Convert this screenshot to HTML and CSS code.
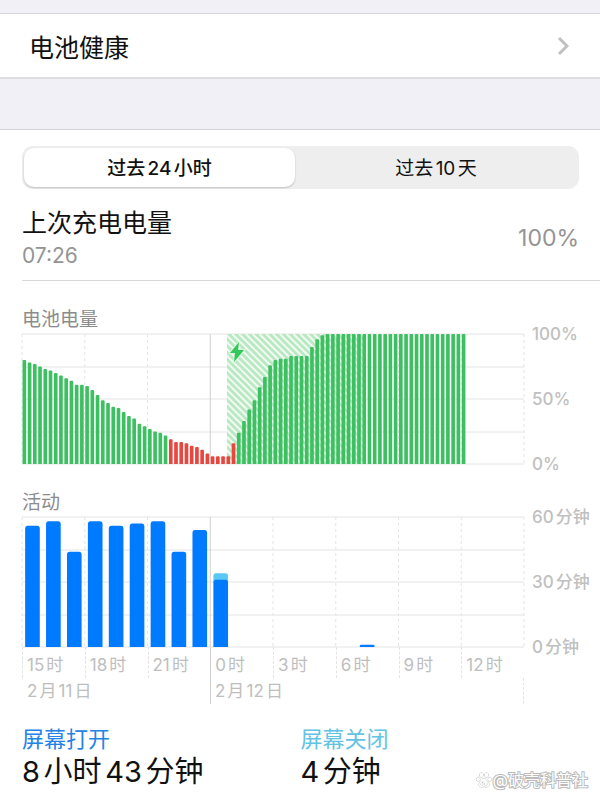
FILE: index.html
```html
<!DOCTYPE html>
<html lang="zh-CN">

<head>
    <meta charset="UTF-8">
    <meta name="viewport" content="width=device-width, initial-scale=1.0">
    <title>电池</title>
    <link rel="stylesheet" href="styles.css">
</head>

<body>
    <a class="row-link" href="#health">
        <span>电池健康</span>
        <svg class="chevron" viewBox="0 0 12 20" aria-hidden="true">
            <path d="M2 2l8 8-8 8" />
        </svg>
    </a>

    <main class="panel">
        <div class="segmented">
            <button type="button" class="segment active">过去24小时</button>
            <button type="button" class="segment">过去10天</button>
        </div>

        <div class="last-charge">
            <div>
                <h2>上次充电电量</h2>
                <p>07:26</p>
            </div>
            <span class="charge-value">100%</span>
        </div>

        <section class="chart">
            <h3>电池电量</h3>
            <div class="chart-body">
                <div class="plot">
                    <svg id="battery" class="plot-svg" viewBox="0 0 960 130" preserveAspectRatio="none"></svg>
                    <svg class="bolt" viewBox="0 0 16 22" aria-hidden="true">
                        <path d="M10 1L1 12h5L5 21 15 9H9z" />
                    </svg>
                </div>
                <div class="scale">
                    <span>100%</span>
                    <span>50%</span>
                    <span>0%</span>
                </div>
            </div>
        </section>

        <section class="chart activity">
            <h3>活动</h3>
            <div class="chart-body">
                <div class="plot">
                    <svg id="activity" class="plot-svg" viewBox="0 0 960 130" preserveAspectRatio="none"></svg>
                </div>
                <div class="scale">
                    <span>60分钟</span>
                    <span>30分钟</span>
                    <span>0分钟</span>
                </div>
                <div class="axis">
                    <div class="hours">
                        <span>15时</span>
                        <span>18时</span>
                        <span>21时</span>
                        <span class="midnight">0时</span>
                        <span>3时</span>
                        <span>6时</span>
                        <span>9时</span>
                        <span>12时</span>
                    </div>
                    <div class="dates">
                        <span>2月11日</span>
                        <span class="midnight">2月12日</span>
                    </div>
                </div>
            </div>
        </section>

        <div class="totals">
            <div>
                <h4 class="screen-on">屏幕打开</h4>
                <p>8小时43分钟</p>
            </div>
            <div>
                <h4 class="screen-off">屏幕关闭</h4>
                <p>4分钟</p>
            </div>
        </div>

        <div class="watermark">
            <svg viewBox="0 0 16 16" aria-hidden="true">
                <ellipse cx="5.5" cy="3" rx="1.7" ry="2.3" />
                <ellipse cx="10.5" cy="3" rx="1.7" ry="2.3" />
                <ellipse cx="2.3" cy="7.3" rx="1.6" ry="2.1" />
                <ellipse cx="13.7" cy="7.3" rx="1.6" ry="2.1" />
                <path d="M8 6.600c-2 0-2.400 2-4 3.400-1.600 1.500-1.400 5 1.400 5 1.200 0 1.600-.4 2.600-.4s1.400.4 2.600.4c2.800 0 3-3.500 1.400-5C10.400 8.600 10 6.600 8 6.600z" />
                <path d="M6.700 9.500v3.500H5.500q-1-.9 0-1.900h1.200M8.800 10.800v2.200h2.100v-2.200" />
            </svg>
            <span>@破壳科普社</span>
        </div>
    </main>
    <script src="main.js"></script>
</body>

</html>
```

FILE: styles.css
```css
/* 全局样式 */
body {
    font-family: Inter, "Noto Sans CJK SC", sans-serif;
    background-color: #f1f0f6;
    color: #111;
    margin: 0;
    padding-top: 13px;
    text-autospace: normal;
}

h2,
h3,
h4,
p {
    margin: 0;
    font-weight: 400;
}

/* 电池健康入口 */
.row-link {
    display: flex;
    align-items: center;
    justify-content: space-between;
    height: 63px;
    padding: 0 31px 0 29px;
    background-color: #fff;
    border-top: 1px solid #d8d8da;
    border-bottom: 2px solid #dededf;
    color: #111;
    font-size: 25px;
    text-decoration: none;
}

.chevron {
    width: 12px;
    height: 20px;
    fill: none;
    stroke: #c0c0c2;
    stroke-width: 3;
}

/* 主面板 */
.panel {
    position: relative;
    margin-top: 50px;
    padding: 16px 0 12px 22px;
    background-color: #fff;
    border-top: 1px solid #d4d4d6;
}

/* 时间段切换 */
.segmented {
    display: grid;
    grid-template-columns: 49fr 51fr;
    height: 39px;
    margin-right: 21px;
    padding: 2px;
    border-radius: 11px;
    background-color: #eee;
}

.segment {
    padding: 0 0 3px;
    border: none;
    border-radius: 10px;
    background: none;
    color: #111;
    font-family: inherit;
    font-size: 19px;
    cursor: pointer;
}

.segment.active {
    background-color: #fff;
    box-shadow: 0 1px 2px rgba(0, 0, 0, 0.2);
    font-weight: 500;
}

/* 上次充电 */
.last-charge {
    display: flex;
    align-items: center;
    justify-content: space-between;
    padding: 16px 21px 9px 0;
    border-bottom: 1px solid #d8d8d8;
}

.last-charge h2 {
    font-size: 25px;
    line-height: 36px;
}

.last-charge p {
    color: #949494;
    font-size: 21px;
    line-height: 30px;
}

.charge-value {
    color: #949494;
    font-size: 23px;
}

/* 图表 */
.chart {
    padding-top: 25px;
}

.chart h3 {
    color: #8c8c8c;
    font-size: 19px;
    line-height: 28px;
}

.chart-body {
    display: grid;
    grid-template-columns: 1fr 76px;
}

.plot {
    position: relative;
    height: 130px;
}

.plot-svg {
    display: block;
    width: 100%;
    height: 130px;
    overflow: visible;
}

.grid-line {
    stroke: #e4e4e4;
    stroke-width: 1;
    vector-effect: non-scaling-stroke;
}

.grid-line.dashed {
    stroke-dasharray: 3 3;
}

.grid-line.solid {
    stroke: #cfcfcf;
}

.hatch-back {
    fill: #b9e8c2;
}

.hatch-line {
    stroke: #f1fbf3;
    stroke-width: 2;
    vector-effect: non-scaling-stroke;
}

.level {
    fill: #3dc061;
}

.level.low {
    fill: #e8473f;
}

.bar-on {
    fill: #007aff;
}

.bar-off {
    fill: #5ac8f5;
}

.bolt {
    position: absolute;
    top: 7px;
    left: 41%;
    width: 18px;
    height: 22px;
    fill: #34c759;
    stroke: #d9f5de;
    stroke-width: 2;
    paint-order: stroke;
}

.scale {
    display: flex;
    flex-direction: column;
    justify-content: space-between;
    margin: -10px 0;
    padding-left: 8px;
    color: #c0c0c0;
    font-size: 17px;
    font-weight: 500;
    line-height: 20px;
    white-space: nowrap;
}

/* 时间轴 */
.axis {
    color: #bebebe;
    font-size: 17px;
    line-height: 26px;
}

.hours {
    display: grid;
    grid-template-columns: repeat(8, 1fr);
}

.hours span,
.dates span {
    padding: 5px 0 0 4px;
    border-left: 1px dashed #e4e4e4;
    white-space: nowrap;
}

.dates {
    display: grid;
    grid-template-columns: 3fr 5fr;
    border-right: 1px dashed #e4e4e4;
}

.dates span {
    padding-top: 0;
    border-left-color: transparent;
}

.hours .midnight,
.dates .midnight {
    border-left: 1px solid #cfcfcf;
}

/* 合计 */
.totals {
    display: grid;
    grid-template-columns: 1fr 1fr;
    padding-top: 19px;
    margin-right: 21px;
}

.totals h4 {
    font-size: 22px;
    line-height: 32px;
}

.totals p {
    font-size: 29px;
    line-height: 34px;
}

.screen-on {
    color: #2583e6;
}

.screen-off {
    color: #62c3e3;
}

/* 水印 */
.watermark {
    position: absolute;
    right: 12px;
    bottom: 10px;
    display: flex;
    align-items: center;
    gap: 1px;
    color: #fff;
    font-size: 16px;
    line-height: 22px;
    text-autospace: no-autospace;
    -webkit-text-stroke: 2px #bbb;
    paint-order: stroke fill;
}

.watermark svg {
    width: 16px;
    height: 16px;
    fill: #fff;
    stroke: #bbb;
    stroke-width: 1;
}
```

FILE: main.js
```javascript
// 每 15 分钟一个电量值
const levels = [
    80, 78, 77, 75, 73, 72, 70, 68, 66, 64, 61, 61,
    60, 57, 53, 49, 47, 44, 43, 40, 37, 35, 31, 29,
    27, 25, 24, 22, 19, 17, 17, 16, 14, 13, 11, 8,
    6, 6, 6, 6, 16, 24, 33, 42, 49, 59, 67, 76,
    80, 81, 81, 83, 83, 83, 83, 90, 96, 99
];
while (levels.length < 85) levels.push(100);

// 每小时使用分钟数：[小时序号, 屏幕打开, 屏幕关闭]
const usage = [
    [0, 56, 0], [1, 58, 0], [2, 44, 0], [3, 58, 0], [4, 56, 0], [5, 57, 0],
    [6, 58, 0], [7, 44, 0], [8, 54, 0], [9, 31, 3], [16, 1, 0]
];

const H = 130;

function grid() {
    let out = '';
    for (let i = 0; i <= 4; i++) {
        const y = Math.round(i * H / 4);
        out += `<line class="grid-line" x1="0" x2="960" y1="${y}" y2="${y}"/>`;
    }
    for (let i = 0; i <= 8; i++) {
        const type = i === 3 ? 'solid' : 'dashed';
        out += `<line class="grid-line ${type}" x1="${i * 120}" x2="${i * 120}" y1="0" y2="${H}"/>`;
    }
    return out;
}

// 充电时段的斜纹
function hatch(from, to) {
    let out = `<clipPath id="charging"><rect x="${from}" y="0" width="${to - from}" height="${H}"/></clipPath>`;
    out += `<g clip-path="url(#charging)"><rect class="hatch-back" x="${from}" y="0" width="${to - from}" height="${H}"/>`;
    for (let x = from - 250; x < to; x += 13) {
        out += `<line class="hatch-line" x1="${x}" y1="0" x2="${x + 250}" y2="${H}"/>`;
    }
    return out + '</g>';
}

// 顶部圆角的柱子
function bar(x, width, bottom, top, rx, ry, cls) {
    return `<path class="${cls}" d="M${x} ${bottom}V${top + ry}Q${x} ${top} ${x + rx} ${top}H${x + width - rx}Q${x + width} ${top} ${x + width} ${top + ry}V${bottom}z"/>`;
}

document.getElementById('battery').innerHTML = grid() + hatch(392, 658) +
    levels.map((v, i) => bar(i * 10 + 1, 7, H, H - v * H / 100, 2, 1, i > 27 && i < 41 ? 'level low' : 'level')).join('');

document.getElementById('activity').innerHTML = grid() +
    usage.map(([hour, on, off]) => {
        const top = H - on * H / 60;
        const x = hour * 40 + 6;
        const cap = off ? bar(x, 28, top + 3, top - off * H / 60, 5, 3, 'bar-off') : '';
        const r = on > 1 ? 3 : 1;
        return cap + bar(x, 28, H, top, r + 2, r, 'bar-on');
    }).join('');
```
